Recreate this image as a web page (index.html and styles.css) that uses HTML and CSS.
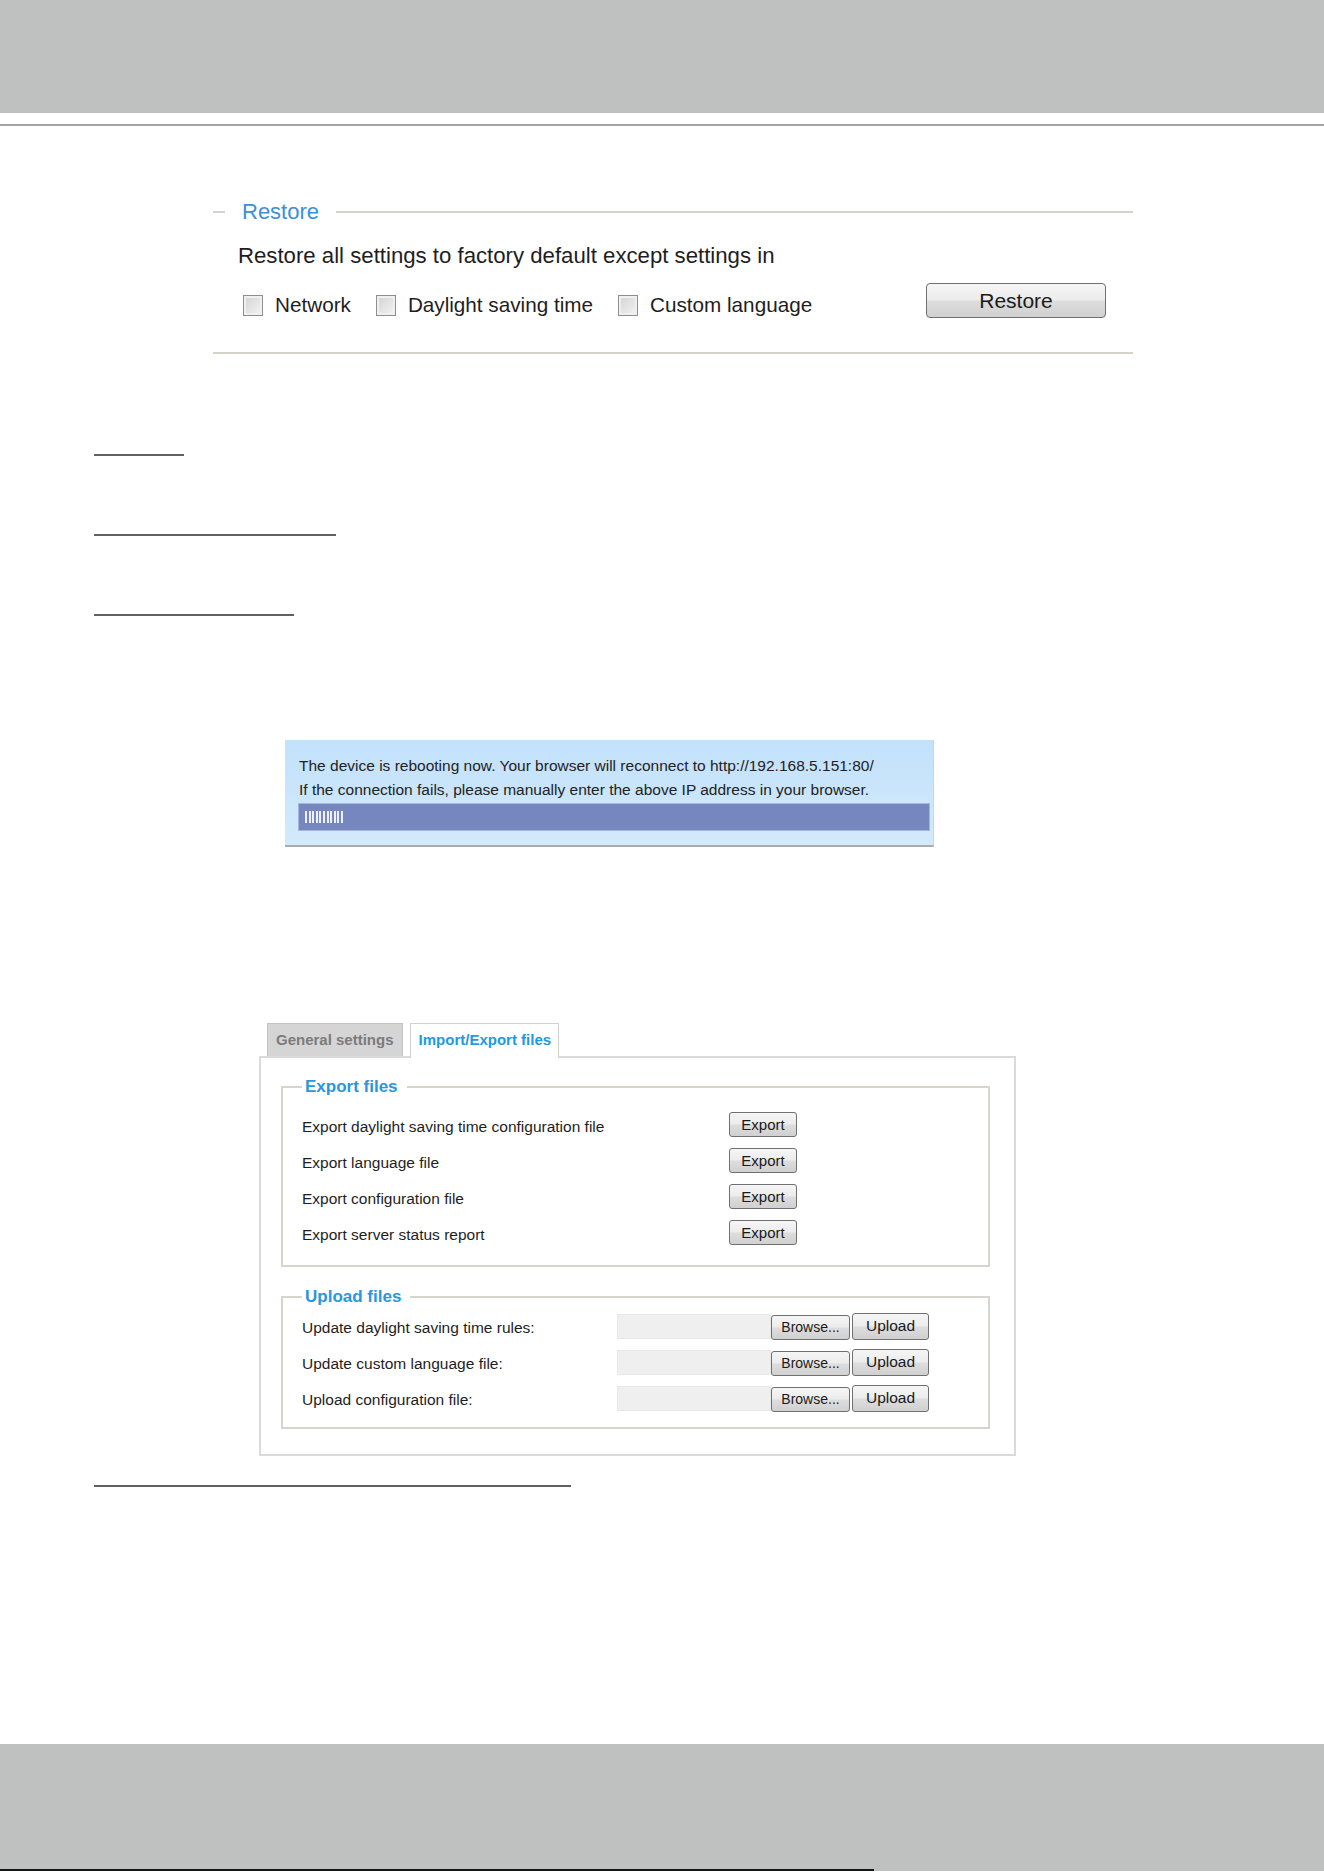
FILE: index.html
```html
<!DOCTYPE html>
<html lang="en">
<head>
    <meta charset="utf-8">
    <title>Maintenance</title>
    <meta name="viewport" content="width=device-width, initial-scale=1.0">
    <link rel="stylesheet" href="styles.css">
</head>
<body>
    <div class="top-band"></div>
    <div class="top-rule"></div>

    <fieldset class="restore">
        <legend>Restore</legend>
        <div class="restore-body">
            <p class="restore-text">Restore all settings to factory default except settings in</p>
            <div class="restore-row">
                <div class="options">
                    <label class="option"><input type="checkbox"><span>Network</span></label>
                    <label class="option"><input type="checkbox"><span>Daylight saving time</span></label>
                    <label class="option"><input type="checkbox"><span>Custom language</span></label>
                </div>
                <button class="btn btn-restore">Restore</button>
            </div>
        </div>
    </fieldset>

    <div class="note-line w1"></div>
    <div class="note-line w2"></div>
    <div class="note-line w3"></div>

    <div class="reboot">
        <p>The device is rebooting now. Your browser will reconnect to http://192.168.5.151:80/</p>
        <p>If the connection fails, please manually enter the above IP address in your browser.</p>
        <div class="progress"><span class="ticks"></span></div>
    </div>

    <div class="settings">
        <div class="tabs">
            <span class="tab">General settings</span>
            <span class="tab active">Import/Export files</span>
        </div>
        <div class="panel">
            <fieldset class="group">
                <legend>Export files</legend>
                <div class="rows export-rows">
                    <span>Export daylight saving time configuration file</span>
                    <button class="btn btn-small">Export</button>
                    <span>Export language file</span>
                    <button class="btn btn-small">Export</button>
                    <span>Export configuration file</span>
                    <button class="btn btn-small">Export</button>
                    <span>Export server status report</span>
                    <button class="btn btn-small">Export</button>
                </div>
            </fieldset>

            <fieldset class="group upload">
                <legend>Upload files</legend>
                <div class="rows upload-rows">
                    <span>Update daylight saving time rules:</span>
                    <div class="file-pick">
                        <span class="file-box"></span>
                        <button class="btn btn-browse">Browse...</button>
                        <button class="btn btn-upload">Upload</button>
                    </div>
                    <span>Update custom language file:</span>
                    <div class="file-pick">
                        <span class="file-box"></span>
                        <button class="btn btn-browse">Browse...</button>
                        <button class="btn btn-upload">Upload</button>
                    </div>
                    <span>Upload configuration file:</span>
                    <div class="file-pick">
                        <span class="file-box"></span>
                        <button class="btn btn-browse">Browse...</button>
                        <button class="btn btn-upload">Upload</button>
                    </div>
                </div>
            </fieldset>
        </div>
    </div>

    <div class="note-line w4"></div>

    <div class="bottom-band"><div class="edge"></div></div>
</body>
</html>
```

FILE: styles.css
```css
body {
    margin: 0;
    font-family: "Liberation Sans", Arial, sans-serif;
    color: #1e1e1e;
    background-color: #ffffff;
}

p {
    margin: 0;
}

/* page header / footer bands */
.top-band {
    height: 113px;
    background-color: #bfc1c0;
}

.top-rule {
    margin-top: 11px;
    height: 2px;
    background-color: #a4a4a4;
}

.bottom-band {
    margin-top: 257px;
    height: 127px;
    background-color: #bfc1c0;
    display: flex;
    align-items: flex-end;
}

.bottom-band .edge {
    width: 874px;
    height: 2px;
    background-color: #151515;
}

/* restore block */
.restore {
    box-sizing: border-box;
    width: 920px;
    margin: 74px 0 0 213px;
    padding: 20px 27px 34px 12px;
    border: none;
    border-top: 2px solid #d5d2ca;
    border-bottom: 2px solid #d5d2ca;
    min-inline-size: 0;
}

.restore legend {
    padding: 0 17px;
    font-size: 22px;
    line-height: 24px;
    color: #3b8fdb;
}

.restore-body {
    padding-left: 13px;
}

.restore-text {
    font-size: 22.2px;
    line-height: 24px;
}

.restore-row {
    display: flex;
    align-items: center;
    height: 35px;
    margin-top: 15px;
}

.options {
    display: flex;
    gap: 25px;
    margin: 9px 0 0 5px;
}

.option {
    display: flex;
    align-items: center;
    gap: 12px;
    font-size: 20.7px;
}

.option input {
    appearance: none;
    -webkit-appearance: none;
    margin: 0;
    width: 20px;
    height: 21px;
    border: 1px solid #8e8e8e;
    background: linear-gradient(135deg, #d2d2d2, #f4f4f4);
    box-shadow: inset 0 0 0 2px #f0f0f0;
}

/* buttons */
.btn {
    font-family: "Liberation Sans", Arial, sans-serif;
    color: #1a1a1a;
    border: 1px solid #707070;
    border-radius: 3px;
    background: linear-gradient(#f5f5f5, #ececec 48%, #dddddd 52%, #d0d0d0);
    padding: 0;
    cursor: pointer;
}

.btn-restore {
    margin-left: auto;
    width: 180px;
    height: 35px;
    font-size: 21px;
    border-radius: 4px;
}

.btn-small {
    width: 68px;
    height: 25px;
    font-size: 15px;
}

/* empty underlined headings */
.note-line {
    height: 2px;
    margin-left: 94px;
    background-color: #606060;
}

.note-line.w1 { margin-top: 100px; width: 90px; }
.note-line.w2 { margin-top: 78px; width: 242px; }
.note-line.w3 { margin-top: 78px; width: 200px; }
.note-line.w4 { margin-top: 29px; width: 477px; }

/* reboot message */
.reboot {
    box-sizing: border-box;
    width: 649px;
    margin: 124px 0 0 285px;
    padding: 14px 3px 14px 14px;
    background: linear-gradient(#c2e1fb, #d3eafb);
    border-right: 1px solid #c9d6e0;
    border-bottom: 2px solid #a9adb0;
    font-size: 15.5px;
    line-height: 24px;
    color: #222;
}

.progress {
    margin: 1px 0 0 -1px;
    height: 26px;
    border: 1px solid #a8b6de;
    background-color: #7686bf;
    display: flex;
    align-items: center;
}

.progress .ticks {
    width: 40px;
    height: 12px;
    margin-left: 6px;
    background: repeating-linear-gradient(90deg, #eef0fa 0 2px, transparent 2px 3.6px);
}

/* tabbed settings panel */
.settings {
    margin: 176px 0 0 259px;
    width: 757px;
}

.tabs {
    display: flex;
    gap: 7px;
    padding-left: 8px;
    height: 33px;
    align-items: flex-end;
}

.tab {
    box-sizing: border-box;
    height: 33px;
    padding: 0 8px;
    border: 1px solid #c4c4c4;
    border-bottom: none;
    font-size: 15px;
    font-weight: bold;
    line-height: 32px;
    color: #7b7b7b;
    background-color: #d5d5d5;
}

.tab.active {
    position: relative;
    height: 35px;
    margin-bottom: -2px;
    padding-right: 7px;
    color: #1d9ae0;
    background-color: #ffffff;
    border-color: #d2d2d2;
}

.panel {
    box-sizing: border-box;
    border: 2px solid #dadada;
    padding: 19px 24px 25px 20px;
}

.group {
    margin: 0;
    padding: 12px 0 12px 19px;
    border: 2px solid #d8d5cf;
    min-inline-size: 0;
}

.group legend {
    padding: 0 9px 0 3px;
    font-size: 17px;
    font-weight: bold;
    line-height: 20px;
    color: #2b95de;
}

.group.upload {
    margin-top: 20px;
    padding-top: 3px;
    padding-bottom: 9px;
}

.rows {
    display: grid;
    grid-auto-rows: 36px;
    align-items: center;
    font-size: 15.5px;
    color: #1e1e1e;
}

.export-rows {
    grid-template-columns: 427px auto;
}

.export-rows .btn {
    margin-top: -5px;
}

.upload-rows {
    grid-template-columns: 315px auto;
}

.file-pick {
    display: flex;
    align-items: center;
    margin-top: -4px;
}

.file-box {
    box-sizing: border-box;
    width: 154px;
    height: 25px;
    background-color: #efefef;
    border: 1px solid #e8e8e8;
}

.btn-browse {
    width: 79px;
    height: 25px;
    font-size: 14px;
    margin-top: 2px;
}

.btn-upload {
    width: 77px;
    height: 27px;
    margin-left: 2px;
    font-size: 15.5px;
}
```
